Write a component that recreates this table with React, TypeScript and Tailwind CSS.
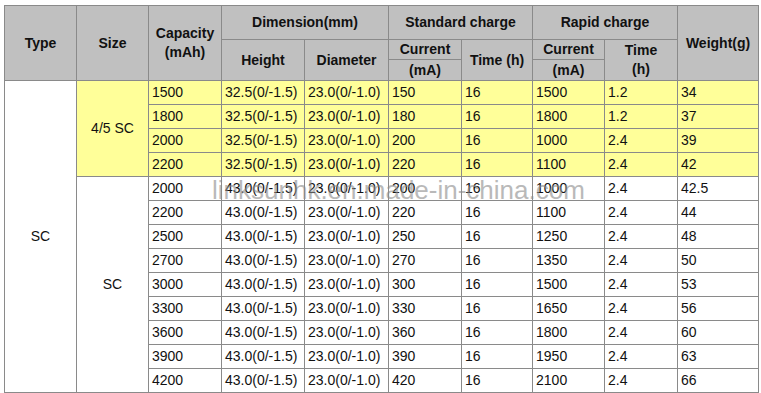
const rows = [
  ['1500', '32.5(0/-1.5)', '23.0(0/-1.0)', '150', '16', '1500', '1.2', '34'],
  ['1800', '32.5(0/-1.5)', '23.0(0/-1.0)', '180', '16', '1800', '1.2', '37'],
  ['2000', '32.5(0/-1.5)', '23.0(0/-1.0)', '200', '16', '1000', '2.4', '39'],
  ['2200', '32.5(0/-1.5)', '23.0(0/-1.0)', '220', '16', '1100', '2.4', '42'],
  ['2000', '43.0(0/-1.5)', '23.0(0/-1.0)', '200', '16', '1000', '2.4', '42.5'],
  ['2200', '43.0(0/-1.5)', '23.0(0/-1.0)', '220', '16', '1100', '2.4', '44'],
  ['2500', '43.0(0/-1.5)', '23.0(0/-1.0)', '250', '16', '1250', '2.4', '48'],
  ['2700', '43.0(0/-1.5)', '23.0(0/-1.0)', '270', '16', '1350', '2.4', '50'],
  ['3000', '43.0(0/-1.5)', '23.0(0/-1.0)', '300', '16', '1500', '2.4', '53'],
  ['3300', '43.0(0/-1.5)', '23.0(0/-1.0)', '330', '16', '1650', '2.4', '56'],
  ['3600', '43.0(0/-1.5)', '23.0(0/-1.0)', '360', '16', '1800', '2.4', '60'],
  ['3900', '43.0(0/-1.5)', '23.0(0/-1.0)', '390', '16', '1950', '2.4', '63'],
  ['4200', '43.0(0/-1.5)', '23.0(0/-1.0)', '420', '16', '2100', '2.4', '66'],
]

const th = 'border border-[#8a8a8a] bg-[#c0c0c0] font-bold text-center align-middle leading-[19px] p-0'
const td = 'border border-[#8a8a8a] px-[3px] py-0 align-middle text-left'

export default function App() {
  return (
    <div className="relative w-[761px] h-[393px] bg-white pt-[5px] pl-[4px] font-['Liberation_Sans',Arial,sans-serif] text-[14px] text-[#111]">
      <table className="border-collapse table-fixed w-[754px]">
        <colgroup>
          <col className="w-[72px]" />
          <col className="w-[72px]" />
          <col className="w-[73px]" />
          <col className="w-[83px]" />
          <col className="w-[84px]" />
          <col className="w-[73px]" />
          <col className="w-[71px]" />
          <col className="w-[72px]" />
          <col className="w-[73px]" />
          <col className="w-[81px]" />
        </colgroup>
        <thead>
          <tr className="h-[34px]">
            <th rowSpan={3} className={th}>Type</th>
            <th rowSpan={3} className={th}>Size</th>
            <th rowSpan={3} className={th}>Capacity<br />(mAh)</th>
            <th colSpan={2} className={th}>Dimension(mm)</th>
            <th colSpan={2} className={th}>Standard charge</th>
            <th colSpan={2} className={th}>Rapid charge</th>
            <th rowSpan={3} className={th}>Weight(g)</th>
          </tr>
          <tr className="h-[19px]">
            <th rowSpan={2} className={th}>Height</th>
            <th rowSpan={2} className={th}>Diameter</th>
            <th className={th}>Current</th>
            <th rowSpan={2} className={th}>Time (h)</th>
            <th className={th}>Current</th>
            <th rowSpan={2} className={th}>Time<br />(h)</th>
          </tr>
          <tr className="h-[21px]">
            <th className={th}>(mA)</th>
            <th className={th}>(mA)</th>
          </tr>
        </thead>
        <tbody>
          {rows.map((r, i) => {
            const yellow = i < 4
            const bg = yellow ? 'bg-[#ffff99]' : 'bg-white'
            return (
              <tr key={i} className="h-[24px]">
                {i === 0 && (
                  <td rowSpan={13} className="border border-[#8a8a8a] bg-white text-center align-middle">SC</td>
                )}
                {i === 0 && (
                  <td rowSpan={4} className="border border-[#8a8a8a] bg-[#ffff99] text-center align-middle">4/5 SC</td>
                )}
                {i === 4 && (
                  <td rowSpan={9} className="border border-[#8a8a8a] bg-white text-center align-middle">SC</td>
                )}
                {r.map((v, j) => (
                  <td key={j} className={`${td} ${bg}`}>{v}</td>
                ))}
              </tr>
            )
          })}
        </tbody>
      </table>
      <div className="absolute left-[212px] top-[175px] text-[26px] leading-[30px] text-[#8c8c8c] opacity-60 whitespace-nowrap pointer-events-none">
        linksunhk.en.made-in-china.com
      </div>
    </div>
  )
}
